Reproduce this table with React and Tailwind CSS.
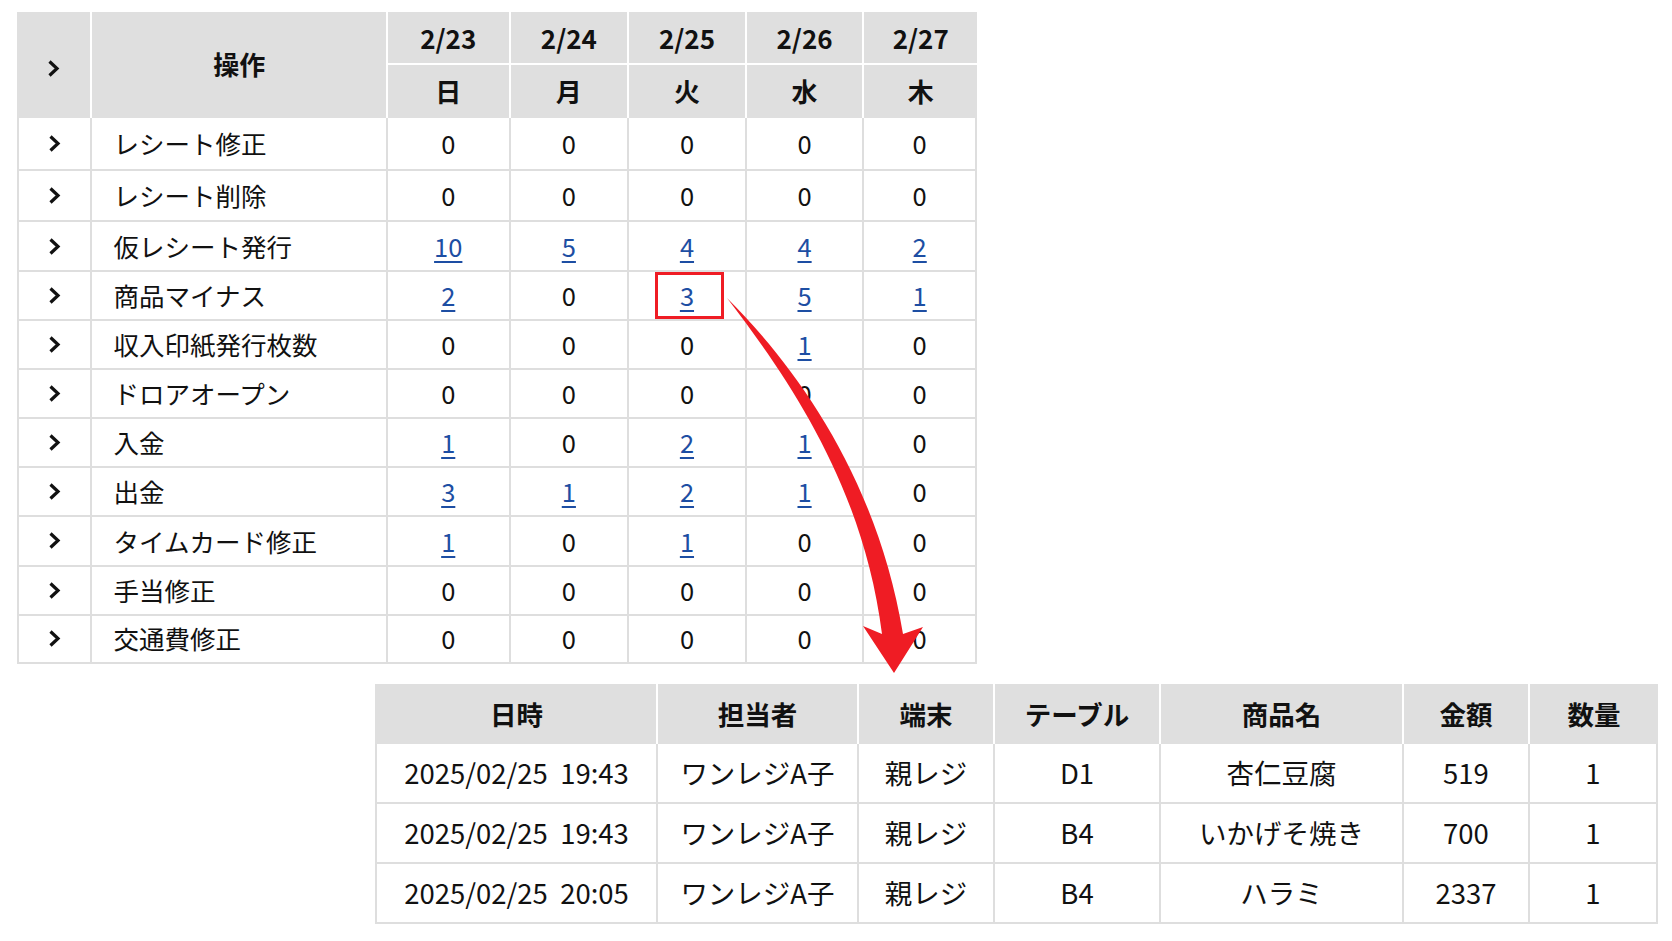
const dates = ['2/23', '2/24', '2/25', '2/26', '2/27'];
const days = ['日', '月', '火', '水', '木'];

const rows = [
  ['レシート修正', [0, 0, 0, 0, 0], 'h-[53px]'],
  ['レシート削除', [0, 0, 0, 0, 0], 'h-[51px]'],
  ['仮レシート発行', [10, 5, 4, 4, 2], 'h-[50px]'],
  ['商品マイナス', [2, 0, 3, 5, 1], 'h-[49px]'],
  ['収入印紙発行枚数', [0, 0, 0, 1, 0], 'h-[49px]'],
  ['ドロアオープン', [0, 0, 0, 0, 0], 'h-[49px]'],
  ['入金', [1, 0, 2, 1, 0], 'h-[49px]'],
  ['出金', [3, 1, 2, 1, 0], 'h-[49px]'],
  ['タイムカード修正', [1, 0, 1, 0, 0], 'h-[49.5px]'],
  ['手当修正', [0, 0, 0, 0, 0], 'h-[49px]'],
  ['交通費修正', [0, 0, 0, 0, 0], 'h-[48px]'],
];

const detailHead = ['日時', '担当者', '端末', 'テーブル', '商品名', '金額', '数量'];
const detailRows = [
  ['2025/02/25\u00a0\u00a019:43', 'ワンレジA子', '親レジ', 'D1', '杏仁豆腐', '519', '1'],
  ['2025/02/25\u00a0\u00a019:43', 'ワンレジA子', '親レジ', 'B4', 'いかげそ焼き', '700', '1'],
  ['2025/02/25\u00a0\u00a020:05', 'ワンレジA子', '親レジ', 'B4', 'ハラミ', '2337', '1'],
];
const detailCols = ['w-[283px]', 'w-[201px]', 'w-[136px]', 'w-[166px]', 'w-[243px]', 'w-[126px]', 'w-[128px]'];

function Chevron() {
  return (
    <svg width="13" height="19" viewBox="0 0 13 19" className="mx-auto block">
      <path d="M2.5 2.5 L10 9.5 L2.5 16.5" fill="none" stroke="#111" strokeWidth="3.2" strokeLinejoin="miter" />
    </svg>
  );
}

function Count({ value, marked }) {
  const inner =
    value > 0 ? (
      <a href="#" className="text-[#1d4ea3] underline decoration-2 underline-offset-[4px]">
        {value}
      </a>
    ) : (
      <span>{value}</span>
    );
  return (
    <td className="relative border-b-2 border-r-2 border-[#dedede] text-center">
      {inner}
      {marked && <div className="absolute top-0 bottom-0 left-[26px] w-[69px] border-[3px] border-[#ef1c24]" />}
    </td>
  );
}

function Arrow() {
  return (
    <svg className="absolute inset-0 pointer-events-none" width="1672" height="941" viewBox="0 0 1672 941">
      <path
        d="M727 298 C795 366, 877 477, 903 634 L923 627 L894 673 L863 626 L882 634 C863 483, 785 374, 727 298 Z"
        fill="#ef1c24"
      />
    </svg>
  );
}

export default function App() {
  return (
    <div className="relative w-[1672px] h-[941px] overflow-hidden bg-white pl-[17px] pt-[12px] font-['Noto_Sans_CJK_JP','Noto_Sans',sans-serif] text-[#111]">
      {/* daily count table */}
      <table className="table-fixed border-separate border-spacing-0 w-[960px] text-[25.5px]">
        <colgroup>
          <col className="w-[75px]" />
          <col className="w-[294px]" />
          <col className="w-[122px]" />
          <col className="w-[118px]" />
          <col className="w-[117px]" />
          <col className="w-[117px]" />
          <col className="w-[112px]" />
        </colgroup>
        <thead className="text-[26px]">
          <tr className="h-[53px]">
            <th rowSpan={2} className="bg-[#dfdfdf] border-r-2 border-white pt-[6px]">
              <Chevron />
            </th>
            <th rowSpan={2} className="bg-[#dfdfdf] border-r-2 border-white font-bold pb-[3px]">操作</th>
            {dates.map((d, i) => (
              <th key={d} className={`bg-[#dfdfdf] border-b-2 border-white font-bold ${i < 4 ? 'border-r-2' : ''}`}>
                {d}
              </th>
            ))}
          </tr>
          <tr className="h-[53px]">
            {days.map((d, i) => (
              <th key={d} className={`bg-[#dfdfdf] border-white font-bold pb-[2px] ${i < 4 ? 'border-r-2' : ''}`}>
                {d}
              </th>
            ))}
          </tr>
        </thead>
        <tbody>
          {rows.map(([label, counts, h], r) => (
            <tr key={label} className={h}>
              <td className="border-b-2 border-r-2 border-l-2 border-[#dedede]">
                <Chevron />
              </td>
              <td className="border-b-2 border-r-2 border-[#dedede] pl-[21px]">{label}</td>
              {counts.map((c, i) => (
                <Count key={i} value={c} marked={r === 3 && i === 2} />
              ))}
            </tr>
          ))}
        </tbody>
      </table>

      {/* detail table */}
      <table className="table-fixed border-separate border-spacing-0 w-[1283px] mt-[20px] ml-[358px] text-[27.5px]">
        <colgroup>
          {detailCols.map((w, i) => (
            <col key={i} className={w} />
          ))}
        </colgroup>
        <thead className="text-[26.5px]">
          <tr className="h-[60px]">
            {detailHead.map((h, i) => (
              <th
                key={h}
                className={`bg-[#dfdfdf] font-bold text-center ${i < 6 ? 'border-r-2 border-white' : ''} ${i === 0 ? 'border-l-2 border-l-[#dfdfdf]' : ''}`}
              >
                {h}
              </th>
            ))}
          </tr>
        </thead>
        <tbody>
          {detailRows.map((row, r) => (
            <tr key={r} className="h-[60px]">
              {row.map((cell, i) => (
                <td
                  key={i}
                  className={`border-b-2 border-r-2 border-[#dedede] text-center whitespace-nowrap ${i === 0 ? 'border-l-2' : ''}`}
                >
                  {cell}
                </td>
              ))}
            </tr>
          ))}
        </tbody>
      </table>

      <Arrow />
    </div>
  );
}
